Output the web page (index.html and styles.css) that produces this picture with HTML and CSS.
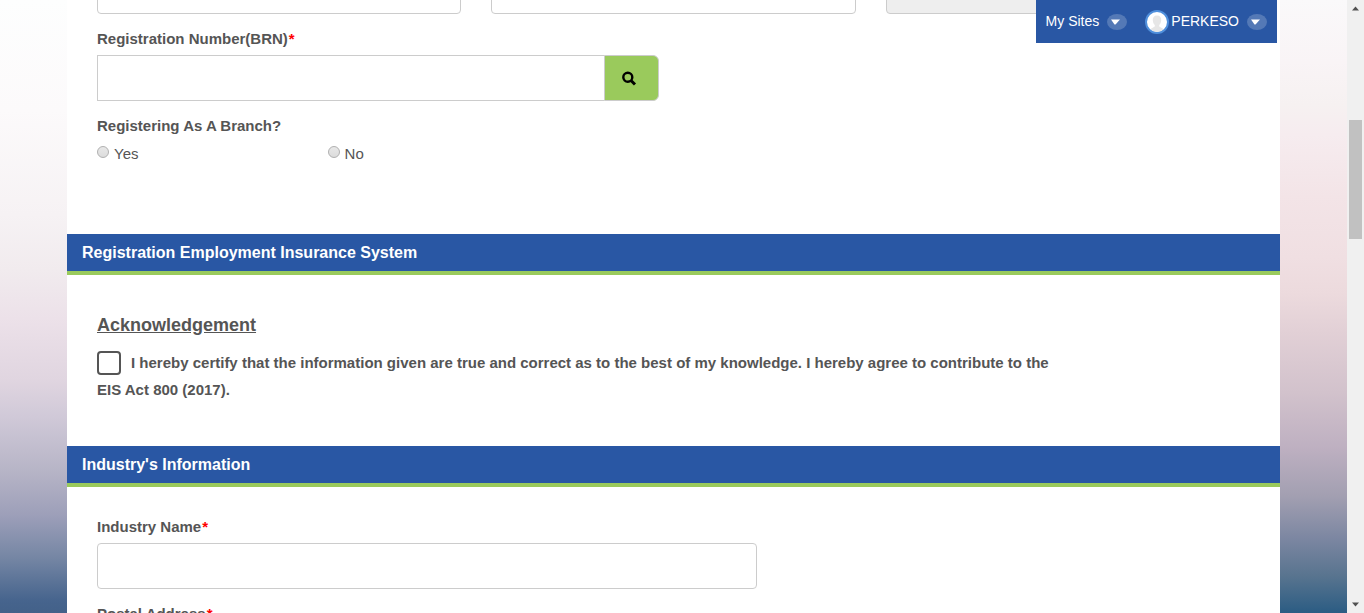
FILE: index.html
```html
<!DOCTYPE html>
<html lang="en">
<head>
<meta charset="utf-8">
<title>PERKESO - Employer Registration</title>
<link rel="stylesheet" href="styles.css">
</head>
<body>
<div class="viewport">
  <main class="page">
    <form class="form">
      <div class="fields">
        <input class="input span-4" type="text" aria-label="Registration detail one">
        <input class="input span-4" type="text" aria-label="Registration detail two">
        <input class="input span-4" type="text" aria-label="Registration detail three" disabled>
      </div>
      <div class="fields">
        <div class="field span-6">
          <label class="label" for="brn">Registration Number(BRN)<span class="required">*</span></label>
          <div class="input-group">
            <input class="input group-input" id="brn" type="text">
            <button class="search-button" type="button" aria-label="Search">
              <svg width="16" height="16" viewBox="0 0 16 16" fill="none" stroke="#000"><circle cx="6.800" cy="7.300" r="4.500" stroke-width="2.400"/><path d="M10 10.500l4 4" stroke-width="3"/></svg>
            </button>
          </div>
        </div>
      </div>
      <div class="field branch" role="radiogroup" aria-labelledby="branch-label">
        <span class="label branch-label" id="branch-label">Registering As A Branch?</span>
        <div class="radios">
          <label class="radio-option"><input class="radio" type="radio" name="branch">Yes</label>
          <label class="radio-option"><input class="radio" type="radio" name="branch">No</label>
        </div>
      </div>

      <h2 class="section-title">Registration Employment Insurance System</h2>
      <section class="fields acknowledgement">
        <div class="span-10">
          <h3 class="subtitle">Acknowledgement</h3>
          <label class="agreement"><input class="checkbox" type="checkbox">I hereby certify that the information given are true and correct as to the best of my knowledge. I hereby agree to contribute to the EIS Act 800 (2017).</label>
        </div>
      </section>

      <h2 class="section-title">Industry's Information</h2>
      <section class="fields industry">
        <div class="field span-7">
          <label class="label" for="industry">Industry Name<span class="required">*</span></label>
          <input class="input" id="industry" type="text">
        </div>
        <div class="field span-7">
          <label class="label" for="postal">Postal Address<span class="required">*</span></label>
          <input class="input" id="postal" type="text">
        </div>
      </section>
    </form>
  </main>

  <nav class="user-bar">
    <button class="user-item" type="button">My Sites
      <span class="caret"><svg width="20" height="16" viewBox="0 0 20 16"><path d="M4 5.500h9L8.500 10.500h-1z" fill="#fff"/></svg></span>
    </button>
    <button class="user-item" type="button">
      <span class="profile"><span class="avatar"><svg width="20" height="20" viewBox="0 0 20 20"><path d="M10 3.500c-3 0-4.500 2-4.200 5 .2 2 1 3.500 2 4.500v1.500L3.500 17v3h13v-3l-4.300-2.500V13c1-1 1.800-2.500 2-4.500.3-3-1.200-5-4.200-5z" fill="#e6e6e6"/></svg></span>PERKESO</span>
      <span class="caret"><svg width="20" height="16" viewBox="0 0 20 16"><path d="M4 5.500h9L8.500 10.500h-1z" fill="#fff"/></svg></span>
    </button>
  </nav>
</div>
<div class="scrollbar" aria-hidden="true">
  <svg class="scroll-arrow" width="17" height="17" viewBox="0 0 17 17"><path d="M5 10.500h7L8.500 6.500z" fill="#505050"/></svg>
  <div class="track"><div class="thumb"></div></div>
  <svg class="scroll-arrow" width="17" height="17" viewBox="0 0 17 17"><path d="M5 6.500h7L8.500 10.500z" fill="#505050"/></svg>
</div>
</body>
</html>
```
FILE: styles.css
```css
* { box-sizing: border-box; }

body {
  margin: 0;
  height: 100vh;
  display: flex;
  overflow: hidden;
  font-family: "Liberation Sans", Arial, sans-serif;
  font-size: 15px;
  line-height: 27px;
  color: #555;
}

.viewport {
  position: relative;
  flex: 1;
  overflow: hidden;
  padding: 0 67px;
  background:
    linear-gradient(#fdfefe 0%, #fcfafb 18%, #f6f2f4 35%, #f1ebee 44%, #ece1e9 52%, #e0d5e0 62%, #d0c9d8 68%, #b6b4c6 77%, #9d9fb9 84%, #7586a4 91%, #46648d 98%, #436189 100%) left / 50% 100% no-repeat,
    linear-gradient(#faf9fa 0%, #f9f4f6 10%, #f6f1f1 17%, #f6ecef 22%, #f3e4e7 32%, #f0dfe2 42%, #ecdadd 48%, #e2d0d6 54%, #d2c2cc 64%, #beb0c1 73%, #a29fb1 81%, #7b86a1 88%, #58748f 94%, #2b5c83 100%) right / 50% 100% no-repeat;
}

.page { background: #fff; min-height: 100%; }

/* The form is shown scrolled part of the way down its first row. */
.form { margin-top: -32px; }

.fields {
  display: grid;
  grid-template-columns: repeat(12, 1fr);
  column-gap: 30px;
  padding: 0 30px;
}

.span-4 { grid-column: span 4; }
.span-6 { grid-column: span 6; }
.span-7 { grid-column: 1 / span 7; }
.span-10 { grid-column: span 10; }

.field {
  display: flex;
  flex-direction: column;
  padding-top: 11px;
}

.label {
  margin-bottom: 3px;
  font-weight: bold;
}

.required { color: #f00; margin-left: 1px; }

.input {
  width: 100%;
  height: 46px;
  padding: 0 12px;
  border: 1px solid #ccc;
  border-radius: 4px;
  background: #fff;
  font: inherit;
}

.input:disabled { background: #eee; }

.input-group { display: flex; }

.group-input { flex: 1; border-radius: 0; border-right: 0; }

.search-button {
  display: flex;
  align-items: center;
  justify-content: center;
  width: 55px;
  padding: 0 4px 0 0;
  border: 1px solid #ccc;
  border-radius: 0 6px 6px 0;
  background: #9aca5c;
}

.branch {
  padding: 11px 30px 0;
  min-height: 133px;
}

.branch-label { margin-bottom: 1px; }

.radios { display: flex; }

.radio-option {
  display: flex;
  align-items: center;
  width: 20%;
}

.radio {
  appearance: none;
  width: 12px;
  height: 12px;
  margin: 0 5px 3px 0;
  border: 1px solid #b0b0b0;
  border-radius: 50%;
  background: linear-gradient(#e8e8e8, #dcdcdc);
}

.section-title {
  margin: 0;
  padding: 5px 15px;
  border-bottom: 4px solid #9aca5c;
  background: #2957a4;
  color: #fff;
  font-size: 16px;
  line-height: 27px;
}

.acknowledgement { padding-top: 37px; padding-bottom: 43px; }

.subtitle {
  margin: 0 0 10px;
  font-size: 18px;
  line-height: 27px;
  text-decoration: underline;
}

.agreement { display: block; font-weight: bold; }

.checkbox {
  appearance: none;
  width: 24px;
  height: 24px;
  margin: -1px 10px 1px 0;
  border: 2px solid #555;
  border-radius: 4px;
  vertical-align: middle;
}

.industry { padding-top: 15px; }

.user-bar {
  position: absolute;
  top: 0;
  right: 70px;
  display: flex;
  gap: 18px;
  height: 43px;
  padding: 0 10px;
  background: #2957a4;
}

.user-item {
  display: flex;
  align-items: center;
  gap: 8px;
  padding: 0;
  border: 0;
  background: none;
  color: #fff;
  font: inherit;
  font-size: 14px;
}

.profile { display: flex; align-items: center; gap: 2px; }

.avatar {
  display: flex;
  width: 24px;
  height: 24px;
  border: 2px solid #4f8fdc;
  border-radius: 50%;
  background: #fff;
  overflow: hidden;
}

.caret {
  display: flex;
  width: 20px;
  height: 16px;
  border-radius: 50%;
  background: #5479b6;
}

.scrollbar {
  display: flex;
  flex-direction: column;
  width: 17px;
  background: #f0f0f0;
}

.scroll-arrow { display: block; flex: none; }

.track {
  flex: 1;
  display: flex;
  flex-direction: column;
  padding: 103px 2px 0;
}

.thumb {
  height: 25%;
  background: #c1c1c1;
}
```
